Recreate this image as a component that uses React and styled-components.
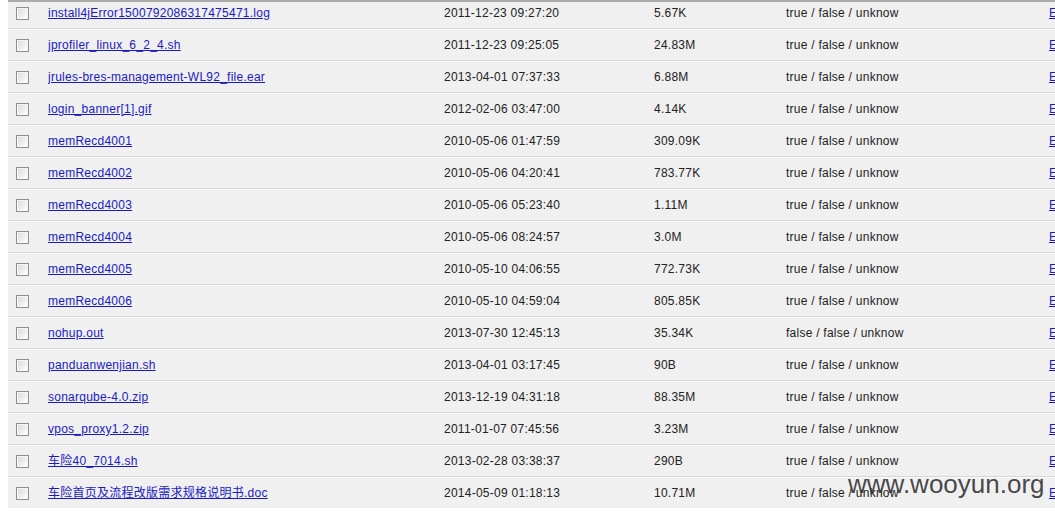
import styled, { createGlobalStyle } from "styled-components";

const GlobalStyle = createGlobalStyle`
    html, body {
        margin: 0;
        padding: 0;
        background: #fff;
        overflow: hidden;
    }
    body {
        font-family: "Liberation Sans", Arial, "Noto Sans CJK SC", sans-serif;
        font-size: 12px;
        color: #222;
    }
`;

const Page = styled.div`
    position: relative;
    width: 1055px;
    height: 514px;
    padding-left: 8px;
    box-sizing: border-box;
`;

const TopRule = styled.div`
    height: 2px;
    background: #ababab;
`;

const Viewport = styled.div`
    overflow: hidden;
    height: 506px;
`;

const FileList = styled.div`
    margin-top: -5px;
`;

const Row = styled.div`
    display: grid;
    grid-template-columns: 40px 396px 210px 132px 263px 100px;
    align-items: center;
    height: 30px;
    background: #f0f0f0;
    border-top: 1px solid #fbfbfb;
    border-bottom: 1px solid #d6d6d6;
`;

const Cell = styled.div`
    white-space: nowrap;
    overflow: hidden;
    line-height: 14px;
    letter-spacing: 0.25px;
`;

const CheckCell = styled.div`
    display: flex;
    align-items: center;
    padding-left: 8px;
`;

const Check = styled.span`
    display: block;
    width: 11px;
    height: 11px;
    border: 1px solid #8e8f8f;
    background: linear-gradient(135deg, #dcdcdc 0%, #f4f4f4 70%, #fff 100%);
    box-shadow: inset 0 0 0 1px #f6f6f6;
`;

const FileLink = styled.a`
    color: #1a1ac8;
    text-decoration: underline;
    cursor: pointer;
`;

const Watermark = styled.div`
    position: absolute;
    left: 848px;
    top: 469px;
    font-family: "Liberation Sans", Arial, sans-serif;
    font-size: 26px;
    color: rgba(55, 55, 55, 0.92);
    pointer-events: none;
`;

const files = [
    ["install4jError1500792086317475471.log", "2011-12-23 09:27:20", "5.67K"],
    ["jprofiler_linux_6_2_4.sh", "2011-12-23 09:25:05", "24.83M"],
    ["jrules-bres-management-WL92_file.ear", "2013-04-01 07:37:33", "6.88M"],
    ["login_banner[1].gif", "2012-02-06 03:47:00", "4.14K"],
    ["memRecd4001", "2010-05-06 01:47:59", "309.09K"],
    ["memRecd4002", "2010-05-06 04:20:41", "783.77K"],
    ["memRecd4003", "2010-05-06 05:23:40", "1.11M"],
    ["memRecd4004", "2010-05-06 08:24:57", "3.0M"],
    ["memRecd4005", "2010-05-10 04:06:55", "772.73K"],
    ["memRecd4006", "2010-05-10 04:59:04", "805.85K"],
    ["nohup.out", "2013-07-30 12:45:13", "35.34K", "false / false / unknow"],
    ["panduanwenjian.sh", "2013-04-01 03:17:45", "90B"],
    ["sonarqube-4.0.zip", "2013-12-19 04:31:18", "88.35M"],
    ["vpos_proxy1.2.zip", "2011-01-07 07:45:56", "3.23M"],
    ["车险40_7014.sh", "2013-02-28 03:38:37", "290B"],
    ["车险首页及流程改版需求规格说明书.doc", "2014-05-09 01:18:13", "10.71M"],
];

function App() {
    return (
        <Page>
            <GlobalStyle />
            <TopRule />
            <Viewport>
                <FileList>
                    {files.map(([name, date, size, perm]) => (
                        <Row key={name}>
                            <CheckCell><Check /></CheckCell>
                            <Cell><FileLink>{name}</FileLink></Cell>
                            <Cell>{date}</Cell>
                            <Cell>{size}</Cell>
                            <Cell>{perm || "true / false / unknow"}</Cell>
                            <Cell><FileLink>Edit</FileLink></Cell>
                        </Row>
                    ))}
                </FileList>
            </Viewport>
            <Watermark>www.wooyun.org</Watermark>
        </Page>
    );
}

export default App;
